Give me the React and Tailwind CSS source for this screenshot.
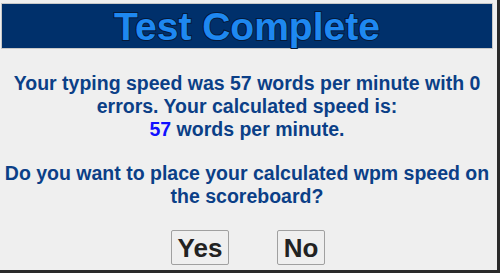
export default function App() {
  return (
    <div className="w-[500px] h-[273px] bg-[#2a2a2a] overflow-hidden" style={{ fontFamily: '"Liberation Sans", Arial, sans-serif' }}>
      <div className="w-[497px] h-[270px] bg-[#efefef] pt-[3px] pl-[1px] flex flex-col">
        <div className="w-[492px] h-[46px] bg-[#00306b] border border-[#c8c8c8] flex items-center justify-center">
          <span className="text-[39px] font-bold leading-none text-[#1e88f0] [-webkit-text-stroke:2px_#061a38] [paint-order:stroke_fill]">Test Complete</span>
        </div>
        <div className="mt-[23px] text-center text-[19.5px] font-bold leading-[23px] text-[#0b3f87] pr-[4px]">
          <p>Your typing speed was 57 words per minute with 0</p>
          <p>errors. Your calculated speed is:</p>
          <p><span className="text-[#1010ff]">57</span> words per minute.</p>
          <p className="mt-[21px]">Do you want to place your calculated wpm speed on</p>
          <p>the scoreboard?</p>
        </div>
        <div className="mt-[22px] flex justify-center gap-[48px] pr-[2px]">
          <button className="w-[58px] h-[35px] border border-[#a0a0a0] rounded-[2px] bg-[#efefef] text-[26px] font-bold text-[#222] leading-none">Yes</button>
          <button className="w-[48px] h-[35px] border border-[#a0a0a0] rounded-[2px] bg-[#efefef] text-[26px] font-bold text-[#222] leading-none">No</button>
        </div>
      </div>
    </div>
  );
}
